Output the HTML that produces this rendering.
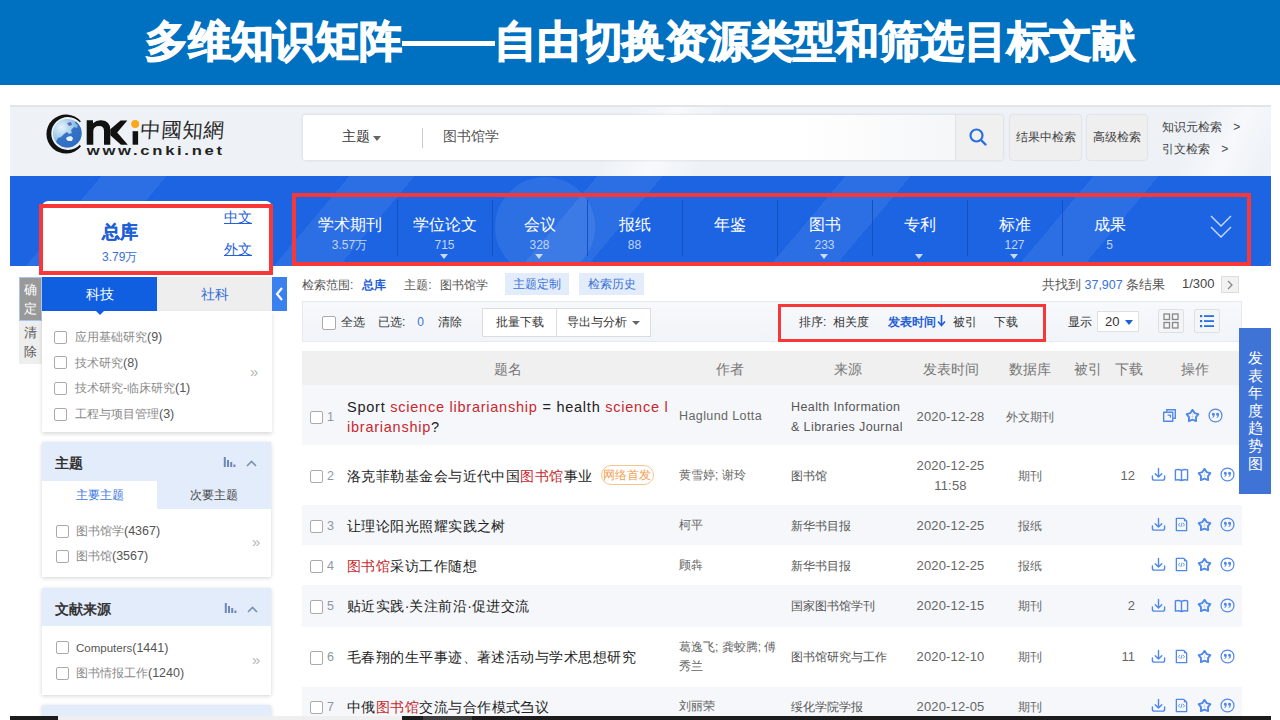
<!DOCTYPE html>
<html><head><meta charset="utf-8">
<style>
*{margin:0;padding:0;box-sizing:border-box}
html,body{width:1280px;height:720px;overflow:hidden;background:#fff;font-family:"Liberation Sans",sans-serif;color:#333}
.a{position:absolute;white-space:nowrap}
#title{left:0;top:0;width:1280px;height:85px;background:#0070c0}
#title .t{left:0;top:16px;width:1280px;text-align:center;color:#fff;font-size:43px;font-weight:700;-webkit-text-stroke:1.2px #fff;line-height:50px;letter-spacing:-0.33px}
#hdr{left:10px;top:105px;width:1261px;height:71px;background:#eef2f7;border-top:2px solid #e2e4e8;overflow:hidden}
#nav{left:10px;top:176px;width:1261px;height:90px;background:#1c64e2;overflow:hidden}
.redbox{position:absolute;border:4.5px solid #f83838}
.navi{position:absolute;top:0;width:93px;height:90px;text-align:center;color:#fff}
.navi .n{position:absolute;left:0;width:93px;top:39px;font-size:16px;line-height:20px}
.navi .c{position:absolute;left:0;width:93px;top:62px;font-size:12px;line-height:14px;color:#c2d5f8}
.navi .tri{position:absolute;left:42px;top:78px;width:0;height:0;border-left:4.5px solid transparent;border-right:4.5px solid transparent;border-top:5px solid #c9d9f8}
.sep{position:absolute;width:1px;height:56px;background:#1450c0}
.panel{position:absolute;background:#fff;box-shadow:0 1px 4px rgba(0,0,0,.18)}
.cb{position:absolute;width:13px;height:13px;border:1px solid #aaa;border-radius:2px;background:#fff}
.ph{position:absolute;left:0;top:0;width:100%;background:#e3ecfb}
.serif{font-family:"Liberation Serif",serif}
.row{position:absolute;left:302px;width:938px}
.tc{font-size:14px;color:#222}
.red{color:#c7282e}
.gray{color:#777}
.ttl{font-size:14px;color:#222;letter-spacing:.45px}
.lat{font-size:14.5px;letter-spacing:.76px}
.lat2{letter-spacing:.4px}
.dot{letter-spacing:0}
.num{font-family:"Liberation Sans",sans-serif;font-size:12.5px;color:#555}
.hd{font-size:13.5px;line-height:18px;color:#777}
</style></head><body>
<svg width="0" height="0" style="position:absolute"><defs>
<symbol id="i-dl" viewBox="0 0 16 16"><g fill="none" stroke="#5088ea" stroke-width="1.5" stroke-linecap="round" stroke-linejoin="round"><path d="M8 1.5 V10.5 M4.5 7.2 L8 10.7 L11.5 7.2"/><path d="M1.5 9.5 V12 Q1.5 14 3.5 14 H12.5 Q14.5 14 14.5 12 V9.5"/></g></symbol>
<symbol id="i-bk" viewBox="0 0 16 16"><g fill="none" stroke="#5088ea" stroke-width="1.5" stroke-linejoin="round"><path d="M1.5 3 Q5 2 8 3.5 Q11 2 14.5 3 V14 Q11 13 8 14.5 Q5 13 1.5 14 Z M8 3.5 V14.5"/></g></symbol>
<symbol id="i-ht" viewBox="0 0 16 16"><g fill="none" stroke="#5088ea" stroke-width="1.4" stroke-linejoin="round"><path d="M2.5 1.5 H10.5 L13.5 4.5 V14.5 H2.5 Z"/><path d="M6.2 6.5 L4.8 8.3 L6.2 10 M9.8 6.5 L11.2 8.3 L9.8 10 M8.6 6 L7.4 10.6" stroke-width="0.9"/></g><path d="M10.5 1.5 L13.5 4.5 H10.5 Z" fill="#5088ea"/></symbol>
<symbol id="i-cp" viewBox="0 0 16 16"><g fill="none" stroke="#5088ea" stroke-width="1.5" stroke-linejoin="round"><path d="M5 4 V1.8 H14.2 V11 H12"/><rect x="1.8" y="4.5" width="9.7" height="9.7"/><path d="M6 7.5 H9 V10.5" stroke-width="1.3"/></g></symbol>
<symbol id="i-st" viewBox="0 0 16 16"><path d="M8.00 2.00 L10.29 5.44 L14.28 6.56 L11.71 9.81 L11.88 13.94 L8.00 12.50 L4.12 13.94 L4.29 9.81 L1.72 6.56 L5.71 5.44 Z" fill="none" stroke="#5088ea" stroke-width="2" stroke-linejoin="round"/><path d="M8 5.5 V10.5 M6 8.5 L8 9.5 L10 8.5" fill="none" stroke="#5088ea" stroke-width=".6" opacity=".35"/></symbol>
<symbol id="i-qt" viewBox="0 0 16 16"><circle cx="8" cy="8" r="6.9" fill="none" stroke="#5088ea" stroke-width="1.3"/><path d="M4.1 6.6 a1.6 1.6 0 1 1 3.2 0.2 q0 2.6 -2.4 3.9 l-0.4 -0.6 q1.1 -0.8 1.3 -1.9 a1.6 1.6 0 0 1 -1.7 -1.6 z M8.6 6.6 a1.6 1.6 0 1 1 3.2 0.2 q0 2.6 -2.4 3.9 l-0.4 -0.6 q1.1 -0.8 1.3 -1.9 a1.6 1.6 0 0 1 -1.7 -1.6 z" fill="#5088ea"/></symbol>
</defs></svg>
<div id="title" class="a"><div class="a" style="left:402px;top:40.5px;width:93px;height:5.5px;background:#fff"></div><div class="a t">多维知识矩阵<span style="display:inline-block;width:93px"></span>自由切换资源类型和筛选目标文献</div></div>

<div id="hdr" class="a">
 <div class="a" style="left:560px;top:-40px;width:180px;height:160px;background:linear-gradient(115deg,rgba(255,255,255,0) 30%,rgba(255,255,255,.55) 50%,rgba(255,255,255,0) 70%)"></div>
 <div class="a" style="left:1150px;top:-40px;width:140px;height:160px;background:linear-gradient(115deg,rgba(255,255,255,0) 30%,rgba(255,255,255,.5) 50%,rgba(255,255,255,0) 70%)"></div>
</div>
<!-- logo -->
<svg class="a" style="left:40px;top:110px" width="190" height="50" viewBox="0 0 190 50">
 <defs><radialGradient id="gl" cx="0.3" cy="0.3" r="0.9"><stop offset="0" stop-color="#e6f3fa"/><stop offset="0.45" stop-color="#9ccbe8"/><stop offset="1" stop-color="#3a7cc8"/></radialGradient></defs>
 <path d="M40.9 11.5 A19.5 19.5 0 1 0 40.9 36.5 L39.9 34.7 A16.5 16.5 0 1 1 39.9 12.3 Z" fill="#121212"/>
 <clipPath id="gc"><circle cx="27.3" cy="23.2" r="14.3"/></clipPath>
 <circle cx="27.3" cy="23.2" r="14.3" fill="url(#gl)"/>
 <g clip-path="url(#gc)">
  <path d="M33 8 L36 11 L35 13 L38 15 L37 18 L34 17 L31 20 L32 23 L29 24 L27 22 L24 24 L21 27 L18 28 L16 32 L14 35 L20 40 L45 40 L45 5 Z" fill="#2a68c2" opacity=".9"/>
  <path d="M27 13 L31 12 L32 15 L29 16 Z" fill="#5a4ab0" opacity=".8"/>
  <path d="M27 27 L31 26 L33 28 L32 31 L28 31 L26 29 Z" fill="#e8f2fb"/>
 </g>
 <path d="M46.7 34.7 V10.3 H53 V13.2 Q56.3 10 61.3 10.3 Q70.3 10.8 70.3 19.8 V34.7 H64 V21 Q64 16 59.2 16 Q53.3 16 53.3 21.5 V34.7 Z" fill="#111"/>
 <path d="M70.3 19.3 L80.6 10.4 H87.3 L77.2 22.4 L87.8 34.7 H81 L70.3 25.2 Z" fill="#111"/>
 <rect x="92.6" y="21.2" width="5.5" height="13.5" fill="#111"/>
 <circle cx="95.2" cy="14" r="4" fill="#fba81a"/>
  <text transform="translate(46.8,45.3) scale(1.3,1)" x="0" y="0" style="font-family:'Liberation Sans',sans-serif;font-size:12.8px;font-weight:bold" fill="#222" textLength="104" lengthAdjust="spacing">www.cnki.net</text>
</svg>
<div class="a serif" style="left:140px;top:117px;font-size:20.5px;line-height:26px;color:#2a2a2a;letter-spacing:0px;transform:skewX(-4deg)">中國知網</div>
<!-- search -->
<div class="a" style="left:303px;top:115px;width:700px;height:45px;background:linear-gradient(90deg,#fff 0%,#fff 70%,#f3f4f6 100%);border-radius:3px;box-shadow:0 0 3px rgba(0,0,0,.15)"></div>
<div class="a" style="left:342px;top:128px;font-size:13.5px;line-height:18px;color:#333">主题</div>
<div class="a" style="left:373px;top:136px;width:0;height:0;border-left:4px solid transparent;border-right:4px solid transparent;border-top:5px solid #666"></div>
<div class="a" style="left:422px;top:128px;width:1px;height:20px;background:#ccc"></div>
<div class="a" style="left:443px;top:128px;font-size:13.5px;line-height:18px;color:#555">图书馆学</div>
<div class="a" style="left:955px;top:115px;width:48px;height:45px;background:#f0f0f0;border-left:1px solid #e2e2e2;border-radius:0 3px 3px 0"></div>
<svg class="a" style="left:968px;top:127px" width="20" height="20" viewBox="0 0 20 20"><circle cx="8.5" cy="8.5" r="6" fill="none" stroke="#2a6fe0" stroke-width="2.2"/><path d="M13 13 L17.5 17.5" stroke="#2a6fe0" stroke-width="2.4" stroke-linecap="round"/></svg>
<div class="a" style="left:1010px;top:115px;width:71px;height:45px;background:#efefef;border-radius:3px;box-shadow:0 0 2px rgba(0,0,0,.2)"></div>
<div class="a" style="left:1010px;top:128px;width:71px;text-align:center;font-size:12px;line-height:18px;color:#444">结果中检索</div>
<div class="a" style="left:1087px;top:115px;width:60px;height:45px;background:#efefef;border-radius:3px;box-shadow:0 0 2px rgba(0,0,0,.2)"></div>
<div class="a" style="left:1087px;top:128px;width:60px;text-align:center;font-size:12px;line-height:18px;color:#444">高级检索</div>
<div class="a" style="left:1162px;top:117.5px;font-size:12px;line-height:18px;color:#444">知识元检索 <span style="margin-left:8px">&gt;</span></div>
<div class="a" style="left:1162px;top:140px;font-size:12px;line-height:18px;color:#444">引文检索 <span style="margin-left:8px">&gt;</span></div>
<div id="nav" class="a">
 <div class="a" style="left:0;top:0;width:1261px;height:90px;background:repeating-linear-gradient(130deg,rgba(255,255,255,0) 0px,rgba(255,255,255,0) 70px,rgba(255,255,255,.07) 70px,rgba(255,255,255,.07) 120px,rgba(255,255,255,0) 120px,rgba(255,255,255,0) 190px)"></div>
 <div class="a" style="left:485px;top:1px;width:100px;height:100px;border-radius:50%;background:rgba(255,255,255,.08)"></div>
</div>
<div class="navi" style="left:303px;top:176px"><div class="n">学术期刊</div><div class="c">3.57万</div></div>
<div class="navi" style="left:398px;top:176px"><div class="n">学位论文</div><div class="c">715</div><div class="tri"></div></div>
<div class="navi" style="left:493px;top:176px"><div class="n">会议</div><div class="c">328</div><div class="tri"></div></div>
<div class="navi" style="left:588px;top:176px"><div class="n">报纸</div><div class="c">88</div></div>
<div class="navi" style="left:683px;top:176px"><div class="n">年鉴</div></div>
<div class="navi" style="left:778px;top:176px"><div class="n">图书</div><div class="c">233</div><div class="tri"></div></div>
<div class="navi" style="left:873px;top:176px"><div class="n">专利</div><div class="tri"></div></div>
<div class="navi" style="left:968px;top:176px"><div class="n">标准</div><div class="c">127</div><div class="tri"></div></div>
<div class="navi" style="left:1063px;top:176px"><div class="n">成果</div><div class="c">5</div></div>
<div class="sep" style="left:397px;top:200px"></div>
<div class="sep" style="left:492px;top:200px"></div>
<div class="sep" style="left:587px;top:200px"></div>
<div class="sep" style="left:682px;top:200px"></div>
<div class="sep" style="left:777px;top:200px"></div>
<div class="sep" style="left:872px;top:200px"></div>
<div class="sep" style="left:967px;top:200px"></div>
<div class="sep" style="left:1062px;top:200px"></div>
<svg class="a" style="left:1208px;top:213px" width="26" height="28" viewBox="0 0 26 28"><path d="M3 3 L13 13 L23 3 M3 14 L13 24 L23 14" fill="none" stroke="#cddbff" stroke-width="1.4"/></svg>
<div class="redbox" style="left:292px;top:193px;width:959px;height:72.5px"></div>

<!-- zongku -->
<div class="a" style="left:42px;top:201px;width:230px;height:72px;background:#fff;border-radius:6px 6px 0 0"></div>
<div class="a" style="left:102px;top:221px;font-size:17.5px;line-height:22px;font-weight:bold;color:#1f5fd6;-webkit-text-stroke:.3px #1f5fd6">总库</div>
<div class="a" style="left:102px;top:248.5px;font-size:12px;line-height:16px;color:#3b6fd6">3.79万</div>
<div class="a" style="left:224px;top:209px;font-size:13.5px;line-height:18px;color:#2660d6;text-decoration:underline">中文</div>
<div class="a" style="left:224px;top:241px;font-size:13.5px;line-height:18px;color:#2660d6;text-decoration:underline">外文</div>
<div class="redbox" style="left:39px;top:204px;width:234px;height:70.5px;border-width:4px"></div>
<!-- confirm/clear -->
<div class="a" style="left:19px;top:277px;width:23px;height:44px;background:#999;border:1px solid #a9c6ee;color:#fff;font-size:13px;line-height:19px;text-align:center;padding-top:2px;white-space:normal">确<br>定</div>
<div class="a" style="left:19px;top:321px;width:23px;height:43px;background:#eee;color:#555;font-size:13px;line-height:19px;text-align:center;padding-top:2px;white-space:normal">清<br>除</div>
<!-- tabs -->
<div class="a" style="left:42px;top:277px;width:115px;height:34px;background:#0f5fe0;color:#fff;font-size:14px;line-height:34px;text-align:center">科技</div>
<div class="a" style="left:157px;top:277px;width:115px;height:34px;background:#eee;color:#2d6bd8;font-size:14px;line-height:34px;text-align:center">社科</div>
<div class="a" style="left:272px;top:277px;width:15px;height:34px;background:#3b80ef"></div>
<svg class="a" style="left:274px;top:286px" width="11" height="16" viewBox="0 0 11 16"><path d="M8 2 L3 8 L8 14" fill="none" stroke="#fff" stroke-width="2.2"/></svg>
<div class="panel" style="left:42px;top:311px;width:230px;height:121px;box-shadow:0 2px 4px rgba(0,0,0,.15)"></div>
<div class="a" style="left:95px;top:310px;width:0;height:0;border-left:5px solid transparent;border-right:5px solid transparent;border-top:5px solid #0f5fe0"></div>
<div class="cb" style="left:54px;top:330.5px"></div><div class="a serif" style="left:75px;top:328.0px;font-size:12px;line-height:18px;color:#555"><span style="color:#8a8a8a">应用基础研究</span><span class="num">(9)</span></div>
<div class="cb" style="left:54px;top:356.2px"></div><div class="a serif" style="left:75px;top:353.7px;font-size:12px;line-height:18px;color:#555"><span style="color:#8a8a8a">技术研究</span><span class="num">(8)</span></div>
<div class="cb" style="left:54px;top:381.9px"></div><div class="a serif" style="left:75px;top:379.4px;font-size:12px;line-height:18px;color:#555"><span style="color:#8a8a8a">技术研究-临床研究</span><span class="num">(1)</span></div>
<div class="cb" style="left:54px;top:407.6px"></div><div class="a serif" style="left:75px;top:405.1px;font-size:12px;line-height:18px;color:#555"><span style="color:#8a8a8a">工程与项目管理</span><span class="num">(3)</span></div>
<div class="a" style="left:250px;top:364px;font-size:15px;line-height:16px;color:#b5b5b5">»</div>
<div class="panel" style="left:42px;top:442px;width:229px;height:135px"></div>
<div class="a" style="left:42px;top:442px;width:229px;height:39px;background:#e3ecfb"></div>
<div class="a" style="left:55px;top:453px;font-size:14px;line-height:20px;font-weight:bold;color:#333">主题</div>
<svg class="a" style="left:223px;top:456px" width="36" height="14" viewBox="0 0 36 14"><path d="M1.8 1 V11 M5 4 V11 M8.2 6 V11 M11.4 8.5 V11" stroke="#6f86b8" stroke-width="2"/><path d="M24 10 L28.5 5.5 L33 10" fill="none" stroke="#7e8fb0" stroke-width="1.6"/></svg>
<div class="a" style="left:157px;top:481px;width:114px;height:28px;background:#e3ecfb"></div>
<div class="a" style="left:42px;top:481px;width:115px;height:28px;line-height:28px;text-align:center;font-size:12px;color:#3a76e0">主要主题</div>
<div class="a" style="left:157px;top:481px;width:114px;height:28px;line-height:28px;text-align:center;font-size:12px;color:#444">次要主题</div>
<div class="cb" style="left:56px;top:524.5px"></div><div class="a serif" style="left:76px;top:522.0px;font-size:12px;line-height:18px;color:#555"><span style="color:#8a8a8a">图书馆学</span><span class="num">(4367)</span></div>
<div class="cb" style="left:56px;top:549.8px"></div><div class="a serif" style="left:76px;top:547.3px;font-size:12px;line-height:18px;color:#555"><span style="color:#8a8a8a">图书馆</span><span class="num">(3567)</span></div>
<div class="a" style="left:252px;top:534px;font-size:15px;line-height:16px;color:#b5b5b5">»</div>
<div class="panel" style="left:42px;top:588px;width:229px;height:107px"></div>
<div class="a" style="left:42px;top:588px;width:229px;height:38px;background:#e3ecfb"></div>
<div class="a" style="left:55px;top:599px;font-size:14px;line-height:20px;font-weight:bold;color:#333">文献来源</div>
<svg class="a" style="left:224px;top:602px" width="36" height="14" viewBox="0 0 36 14"><path d="M1.8 1 V11 M5 4 V11 M8.2 6 V11 M11.4 8.5 V11" stroke="#6f86b8" stroke-width="2"/><path d="M24 10 L28.5 5.5 L33 10" fill="none" stroke="#7e8fb0" stroke-width="1.6"/></svg>
<div class="cb" style="left:56px;top:641.0px"></div><div class="a serif" style="left:76px;top:638.5px;font-size:12px;line-height:18px;color:#555"><span class="num" style="font-size:11.5px">Computers</span><span class="num">(1441)</span></div>
<div class="cb" style="left:56px;top:666.8px"></div><div class="a serif" style="left:76px;top:664.3px;font-size:12px;line-height:18px;color:#555"><span style="color:#8a8a8a">图书情报工作</span><span class="num">(1240)</span></div>
<div class="a" style="left:252px;top:652px;font-size:15px;line-height:16px;color:#b5b5b5">»</div>
<div class="panel" style="left:42px;top:705px;width:229px;height:30px;background:#e3ecfb"></div>
<!-- main -->
<div class="a" style="left:302px;top:276px;font-size:12px;line-height:18px;color:#555">检索范围:<b style="color:#1f5fd6;margin-left:9px">总库</b><span style="margin-left:18px">主题:<span style="margin-left:8px">图书馆学</span></span></div>
<div class="a" style="left:505px;top:273px;width:64px;height:22px;background:#e3ecfb;color:#3a72d8;font-size:12px;line-height:22px;text-align:center">主题定制</div>
<div class="a" style="left:579px;top:273px;width:65px;height:22px;background:#e3ecfb;color:#3a72d8;font-size:12px;line-height:22px;text-align:center">检索历史</div>
<div class="a" style="left:1042px;top:275.5px;font-size:12.5px;line-height:18px;color:#555">共找到 <span style="color:#3a72d8">37,907</span> 条结果</div>
<div class="a" style="left:1182px;top:275px;font-size:13px;line-height:18px;color:#444">1/300</div>
<div class="a" style="left:1221px;top:276px;width:18px;height:17px;background:#f2f2f2;border:1px solid #ddd"></div>
<svg class="a" style="left:1226px;top:280px" width="8" height="10" viewBox="0 0 8 10"><path d="M2 1 L6 5 L2 9" fill="none" stroke="#888" stroke-width="1.3"/></svg>
<!-- toolbar -->
<div class="a" style="left:302px;top:301px;width:940px;height:41px;background:linear-gradient(#f7f9fc,#f1f4f8);border:1px solid #e6eaf0"></div>
<div class="cb" style="left:322px;top:316px;width:13.5px;height:13.5px"></div>
<div class="a" style="left:341px;top:313px;font-size:12px;line-height:18px;color:#333">全选</div>
<div class="a" style="left:378px;top:313px;font-size:12px;line-height:18px;color:#333">已选:<span style="color:#3a72d8;margin-left:12px">0</span></div>
<div class="a" style="left:438px;top:313px;font-size:12px;line-height:18px;color:#333">清除</div>
<div class="a" style="left:482px;top:308px;width:75px;height:29px;background:#fff;border:1px solid #dcdcdc;font-size:12px;line-height:27px;text-align:center;color:#333">批量下载</div>
<div class="a" style="left:556px;top:308px;width:95px;height:29px;background:#fff;border:1px solid #dcdcdc;font-size:12px;line-height:27px;color:#333;padding-left:10px">导出与分析</div>
<div class="a" style="left:632px;top:321px;width:0;height:0;border-left:4px solid transparent;border-right:4px solid transparent;border-top:4.5px solid #666"></div>
<div class="a" style="left:799px;top:313px;font-size:12px;line-height:18px;color:#333">排序:<span style="margin-left:7px">相关度</span></div>
<div class="a" style="left:888px;top:313px;font-size:12px;line-height:18px;color:#1f5fd6;font-weight:bold">发表时间</div>
<svg class="a" style="left:937px;top:314px" width="9" height="13" viewBox="0 0 9 13"><path d="M4.5 1 V11 M1 7.5 L4.5 11.5 L8 7.5" fill="none" stroke="#1f5fd6" stroke-width="1.6"/></svg>
<div class="a" style="left:953px;top:313px;font-size:12px;line-height:18px;color:#333">被引</div>
<div class="a" style="left:994px;top:313px;font-size:12px;line-height:18px;color:#333">下载</div>
<div class="redbox" style="left:778px;top:304px;width:268px;height:38px;border-width:3.8px"></div>
<div class="a" style="left:1068px;top:313px;font-size:12px;line-height:18px;color:#333">显示</div>
<div class="a" style="left:1097px;top:311px;width:42px;height:21px;background:#fff;border:1px solid #e0e0e0;font-size:13px;line-height:19px;color:#333;padding-left:7px">20</div>
<div class="a" style="left:1125px;top:320px;width:0;height:0;border-left:4px solid transparent;border-right:4px solid transparent;border-top:5px solid #1f5fd6"></div>
<div class="a" style="left:1158px;top:309px;width:26px;height:24px;background:#f4f5f7;border:1px solid #e0e0e0;border-radius:2px"></div>
<svg class="a" style="left:1163px;top:313px" width="16" height="16" viewBox="0 0 16 16"><g fill="none" stroke="#888" stroke-width="1.3"><rect x="1" y="1" width="5.5" height="5.5"/><rect x="9.5" y="1" width="5.5" height="5.5"/><rect x="1" y="9.5" width="5.5" height="5.5"/><rect x="9.5" y="9.5" width="5.5" height="5.5"/></g></svg>
<div class="a" style="left:1194px;top:309px;width:26px;height:24px;background:#f4f5f7;border:1px solid #e0e0e0;border-radius:2px"></div>
<svg class="a" style="left:1199px;top:313px" width="16" height="16" viewBox="0 0 16 16"><g fill="#2a6fe0"><rect x="1" y="2" width="2.2" height="2.2"/><rect x="1" y="7" width="2.2" height="2.2"/><rect x="1" y="12" width="2.2" height="2.2"/><rect x="5" y="2.2" width="10" height="1.8"/><rect x="5" y="7.2" width="10" height="1.8"/><rect x="5" y="12.2" width="10" height="1.8"/></g></svg>
<!-- table header -->
<div class="a" style="left:302px;top:351px;width:938px;height:34px;background:#f0f0f0"></div>
<div class="a hd" style="left:494px;top:361px">题名</div>
<div class="a hd" style="left:716px;top:361px">作者</div>
<div class="a hd" style="left:834px;top:361px">来源</div>
<div class="a hd" style="left:923px;top:361px">发表时间</div>
<div class="a hd" style="left:1009px;top:361px">数据库</div>
<div class="a hd" style="left:1074px;top:361px">被引</div>
<div class="a hd" style="left:1115px;top:361px">下载</div>
<div class="a hd" style="left:1181px;top:361px">操作</div>
<!-- rows -->
<div class="a" style="left:302px;top:385px;width:940px;height:59.5px;background:#f5f7fa"></div>
<div class="a" style="left:302px;top:444.5px;width:940px;height:60.5px;background:#fff"></div>
<div class="a" style="left:302px;top:505px;width:940px;height:40px;background:#f5f7fa"></div>
<div class="a" style="left:302px;top:545px;width:940px;height:40px;background:#fff"></div>
<div class="a" style="left:302px;top:585px;width:940px;height:42px;background:#f5f7fa"></div>
<div class="a" style="left:302px;top:627px;width:940px;height:59.5px;background:#fff"></div>
<div class="a" style="left:302px;top:686.5px;width:940px;height:40px;background:#f5f7fa"></div>
<div class="cb" style="left:309.5px;top:410.7px;width:13.5px;height:13.5px"></div>
<div class="a" style="left:327px;top:408.5px;font-size:12.5px;line-height:16px;color:#8d96a8">1</div>
<div class="a ttl" style="left:347px;top:396.5px;line-height:20px"><span class="lat">Sport <span class="red">science librarianship</span> = health <span class="red">science l</span></span><br><span class="lat"><span class="red">ibrarianship</span>?</span></div>
<div class="a" style="left:679px;top:407.0px;font-size:12.5px;line-height:19px;color:#666"><span class="lat2">Haglund Lotta</span></div>
<div class="a" style="left:791px;top:396.5px;font-size:12.5px;line-height:20px;color:#555"><span class="lat2">Health Information<br>&amp; Libraries Journal</span></div>
<div class="a" style="left:910px;top:406.5px;width:81px;text-align:center;font-size:13px;line-height:20px;color:#666;white-space:normal;letter-spacing:.15px">2020-12-28</div>
<div class="a" style="left:1005px;top:406.5px;width:50px;text-align:center;font-size:12px;line-height:20px;color:#666">外文期刊</div>
<svg class="a" style="left:1162px;top:408.0px" width="15" height="15"><use href="#i-cp"/></svg><svg class="a" style="left:1185px;top:408.0px" width="15" height="15"><use href="#i-st"/></svg><svg class="a" style="left:1208px;top:408.0px" width="15" height="15"><use href="#i-qt"/></svg>
<div class="cb" style="left:309.5px;top:469.7px;width:13.5px;height:13.5px"></div>
<div class="a" style="left:327px;top:467.5px;font-size:12.5px;line-height:16px;color:#8d96a8">2</div>
<div class="a ttl" style="left:347px;top:465.5px;line-height:20px">洛克菲勒基金会与近代中国<span class="red">图书馆</span>事业</div>
<div class="a" style="left:600.5px;top:464.5px;width:53px;height:20.5px;border:1.2px solid #f6c592;border-radius:10.5px;color:#f2a050;font-size:11.5px;line-height:18px;text-align:center">网络首发</div>
<div class="a" style="left:679px;top:466.0px;font-size:12px;line-height:19px;color:#666">黄雪婷; 谢玲</div>
<div class="a" style="left:791px;top:465.5px;font-size:12px;line-height:20px;color:#555">图书馆</div>
<div class="a" style="left:910px;top:455.5px;width:81px;text-align:center;font-size:13px;line-height:20px;color:#666;white-space:normal;letter-spacing:.15px">2020-12-25<br>11:58</div>
<div class="a" style="left:1005px;top:465.5px;width:50px;text-align:center;font-size:12px;line-height:20px;color:#666">期刊</div>
<div class="a" style="left:1100px;top:465.5px;width:35px;text-align:right;font-size:13px;line-height:20px;color:#666">12</div>
<svg class="a" style="left:1151px;top:467.0px" width="15" height="15"><use href="#i-dl"/></svg><svg class="a" style="left:1174px;top:467.0px" width="15" height="15"><use href="#i-bk"/></svg><svg class="a" style="left:1197px;top:467.0px" width="15" height="15"><use href="#i-st"/></svg><svg class="a" style="left:1220px;top:467.0px" width="15" height="15"><use href="#i-qt"/></svg>
<div class="cb" style="left:309.5px;top:519.7px;width:13.5px;height:13.5px"></div>
<div class="a" style="left:327px;top:517.5px;font-size:12.5px;line-height:16px;color:#8d96a8">3</div>
<div class="a ttl" style="left:347px;top:515.5px;line-height:20px">让理论阳光照耀实践之树</div>
<div class="a" style="left:679px;top:516.0px;font-size:12px;line-height:19px;color:#666">柯平</div>
<div class="a" style="left:791px;top:515.5px;font-size:12px;line-height:20px;color:#555">新华书目报</div>
<div class="a" style="left:910px;top:515.5px;width:81px;text-align:center;font-size:13px;line-height:20px;color:#666;white-space:normal;letter-spacing:.15px">2020-12-25</div>
<div class="a" style="left:1005px;top:515.5px;width:50px;text-align:center;font-size:12px;line-height:20px;color:#666">报纸</div>
<svg class="a" style="left:1151px;top:517.0px" width="15" height="15"><use href="#i-dl"/></svg><svg class="a" style="left:1174px;top:517.0px" width="15" height="15"><use href="#i-ht"/></svg><svg class="a" style="left:1197px;top:517.0px" width="15" height="15"><use href="#i-st"/></svg><svg class="a" style="left:1220px;top:517.0px" width="15" height="15"><use href="#i-qt"/></svg>
<div class="cb" style="left:309.5px;top:559.7px;width:13.5px;height:13.5px"></div>
<div class="a" style="left:327px;top:557.5px;font-size:12.5px;line-height:16px;color:#8d96a8">4</div>
<div class="a ttl" style="left:347px;top:555.5px;line-height:20px"><span class="red">图书馆</span>采访工作随想</div>
<div class="a" style="left:679px;top:556.0px;font-size:12px;line-height:19px;color:#666">顾犇</div>
<div class="a" style="left:791px;top:555.5px;font-size:12px;line-height:20px;color:#555">新华书目报</div>
<div class="a" style="left:910px;top:555.5px;width:81px;text-align:center;font-size:13px;line-height:20px;color:#666;white-space:normal;letter-spacing:.15px">2020-12-25</div>
<div class="a" style="left:1005px;top:555.5px;width:50px;text-align:center;font-size:12px;line-height:20px;color:#666">报纸</div>
<svg class="a" style="left:1151px;top:557.0px" width="15" height="15"><use href="#i-dl"/></svg><svg class="a" style="left:1174px;top:557.0px" width="15" height="15"><use href="#i-ht"/></svg><svg class="a" style="left:1197px;top:557.0px" width="15" height="15"><use href="#i-st"/></svg><svg class="a" style="left:1220px;top:557.0px" width="15" height="15"><use href="#i-qt"/></svg>
<div class="cb" style="left:309.5px;top:600.2px;width:13.5px;height:13.5px"></div>
<div class="a" style="left:327px;top:598.0px;font-size:12.5px;line-height:16px;color:#8d96a8">5</div>
<div class="a ttl" style="left:347px;top:596.0px;line-height:20px">贴近实践<span class="dot">·</span>关注前沿<span class="dot">·</span>促进交流</div>
<div class="a" style="left:791px;top:596.0px;font-size:12px;line-height:20px;color:#555">国家图书馆学刊</div>
<div class="a" style="left:910px;top:596.0px;width:81px;text-align:center;font-size:13px;line-height:20px;color:#666;white-space:normal;letter-spacing:.15px">2020-12-15</div>
<div class="a" style="left:1005px;top:596.0px;width:50px;text-align:center;font-size:12px;line-height:20px;color:#666">期刊</div>
<div class="a" style="left:1100px;top:596.0px;width:35px;text-align:right;font-size:13px;line-height:20px;color:#666">2</div>
<svg class="a" style="left:1151px;top:597.5px" width="15" height="15"><use href="#i-dl"/></svg><svg class="a" style="left:1174px;top:597.5px" width="15" height="15"><use href="#i-bk"/></svg><svg class="a" style="left:1197px;top:597.5px" width="15" height="15"><use href="#i-st"/></svg><svg class="a" style="left:1220px;top:597.5px" width="15" height="15"><use href="#i-qt"/></svg>
<div class="cb" style="left:309.5px;top:651.2px;width:13.5px;height:13.5px"></div>
<div class="a" style="left:327px;top:649.0px;font-size:12.5px;line-height:16px;color:#8d96a8">6</div>
<div class="a ttl" style="left:347px;top:647.0px;line-height:20px">毛春翔的生平事迹、著述活动与学术思想研究</div>
<div class="a" style="left:679px;top:638.0px;font-size:12px;line-height:19px;color:#666">葛逸飞; 龚蛟腾; 傅<br>秀兰</div>
<div class="a" style="left:791px;top:647.0px;font-size:12px;line-height:20px;color:#555">图书馆研究与工作</div>
<div class="a" style="left:910px;top:647.0px;width:81px;text-align:center;font-size:13px;line-height:20px;color:#666;white-space:normal;letter-spacing:.15px">2020-12-10</div>
<div class="a" style="left:1005px;top:647.0px;width:50px;text-align:center;font-size:12px;line-height:20px;color:#666">期刊</div>
<div class="a" style="left:1100px;top:647.0px;width:35px;text-align:right;font-size:13px;line-height:20px;color:#666">11</div>
<svg class="a" style="left:1151px;top:648.5px" width="15" height="15"><use href="#i-dl"/></svg><svg class="a" style="left:1174px;top:648.5px" width="15" height="15"><use href="#i-ht"/></svg><svg class="a" style="left:1197px;top:648.5px" width="15" height="15"><use href="#i-st"/></svg><svg class="a" style="left:1220px;top:648.5px" width="15" height="15"><use href="#i-qt"/></svg>
<div class="cb" style="left:309.5px;top:700.7px;width:13.5px;height:13.5px"></div>
<div class="a" style="left:327px;top:698.5px;font-size:12.5px;line-height:16px;color:#8d96a8">7</div>
<div class="a ttl" style="left:347px;top:696.5px;line-height:20px">中俄<span class="red">图书馆</span>交流与合作模式刍议</div>
<div class="a" style="left:679px;top:697.0px;font-size:12px;line-height:19px;color:#666">刘丽荣</div>
<div class="a" style="left:791px;top:696.5px;font-size:12px;line-height:20px;color:#555">绥化学院学报</div>
<div class="a" style="left:910px;top:696.5px;width:81px;text-align:center;font-size:13px;line-height:20px;color:#666;white-space:normal;letter-spacing:.15px">2020-12-05</div>
<div class="a" style="left:1005px;top:696.5px;width:50px;text-align:center;font-size:12px;line-height:20px;color:#666">期刊</div>
<svg class="a" style="left:1151px;top:698.0px" width="15" height="15"><use href="#i-dl"/></svg><svg class="a" style="left:1174px;top:698.0px" width="15" height="15"><use href="#i-ht"/></svg><svg class="a" style="left:1197px;top:698.0px" width="15" height="15"><use href="#i-st"/></svg><svg class="a" style="left:1220px;top:698.0px" width="15" height="15"><use href="#i-qt"/></svg>
<!-- side tab -->
<div class="a" style="left:1239px;top:328px;width:32px;height:166px;background:#3f74d6;color:#fff;font-size:15px;line-height:17.6px;text-align:center;padding-top:21px;white-space:normal">发<br>表<br>年<br>度<br>趋<br>势<br>图</div>
<!-- bottom bar -->
<div class="a" style="left:10px;top:716px;width:1261px;height:4px;background:#1c1c1c"></div>
<div class="a" style="left:58px;top:716px;width:344px;height:4px;background:#efefef"></div>
<div class="a" style="left:423px;top:716px;width:49px;height:4px;background:#3c3c3c"></div>
</body></html>
